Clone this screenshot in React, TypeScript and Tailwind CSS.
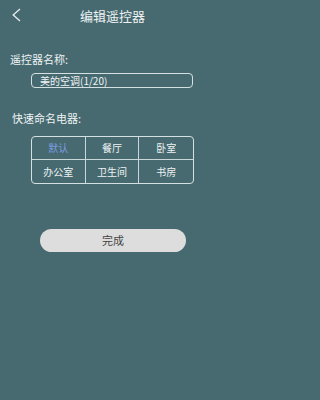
import React from 'react';

const font = { fontFamily: '"Noto Sans CJK SC", "Noto Sans", sans-serif' };

const rooms = [
  ['默认', '餐厅', '卧室'],
  ['办公室', '卫生间', '书房'],
];

const App: React.FC = () => {
  return (
    <div className="min-h-screen w-full bg-[#466a70]" style={font}>
      <div className="w-[225px] h-[400px] text-white overflow-hidden">
        {/* Header */}
        <div className="relative h-[30px] flex items-center justify-center">
          <svg className="absolute left-[11px] top-[8px]" width="11" height="14" viewBox="0 0 11 14">
            <path d="M9 1 L2.2 7 L9 13" fill="none" stroke="#e6eef0" strokeWidth="1.3" />
          </svg>
          <span className="text-[13px] text-[#eef2f3] leading-none">编辑遥控器</span>
        </div>

        {/* Name */}
        <div className="mt-[24px] px-[10px] text-[11px] text-[#eef2f3] leading-none">遥控器名称:</div>
        <div className="ml-[31px] w-[162px] h-[15px] mt-[8px] border border-[#d4e0e2] rounded-[4px] flex items-center pl-[8px] text-[10px] text-[#f0f4f5] leading-none">
          美的空调(1/20)
        </div>

        {/* Quick names */}
        <div className="mt-[25px] px-[12px] text-[11px] text-[#eef2f3] leading-none">快速命名电器:</div>
        <div className="ml-[31px] w-[163px] mt-[12px] border border-[#d4e0e2] rounded-[4px] overflow-hidden">
          {rooms.map((row, r) => (
            <div key={r} className={`grid grid-cols-3 h-[23px] ${r === 0 ? 'border-b border-[#c9d6d8]' : ''}`}>
              {row.map((name, c) => (
                <div
                  key={c}
                  className={`flex items-center justify-center text-[10px] leading-none ${c < 2 ? 'border-r border-[#c9d6d8]' : ''} ${r === 0 && c === 0 ? 'text-[#7d9ce0]' : 'text-[#eef2f3]'}`}
                >
                  {name}
                </div>
              ))}
            </div>
          ))}
        </div>

        {/* Button */}
        <div className="mt-[45px] flex justify-center pl-[1px]">
          <button className="w-[146px] h-[23px] rounded-full bg-[#dddddd] text-[#444] text-[11px] leading-none flex items-center justify-center">
            完成
          </button>
        </div>
      </div>
    </div>
  );
};

export default App;
